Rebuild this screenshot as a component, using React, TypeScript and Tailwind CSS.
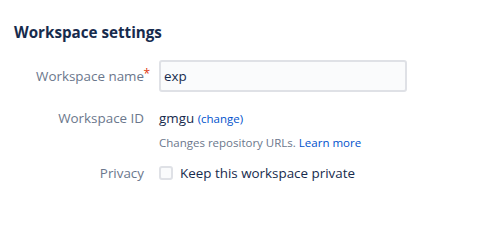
import React from "react";

const font = { fontFamily: '"Open Sans", "Noto Sans", sans-serif' };

function Label({ children, required }: { children: React.ReactNode; required?: boolean }) {
  return (
    <div className="relative w-[130px] shrink-0 text-right text-[13.4px] leading-[20px] text-[#6b778c]">
      {children}
      {required && (
        <span className="absolute -right-[6px] -top-[2px] text-[12px] text-[#de350b]">*</span>
      )}
    </div>
  );
}

export default function App() {
  return (
    <div className="h-[222px] w-[499px] bg-white px-[14px] pt-[22px] text-[#172b4d]" style={font}>
      <h2 className="text-[15.2px] font-bold leading-[20px] text-[#172b4d]">Workspace settings</h2>

      <div className="mt-[18px] flex flex-col">
        <div className="flex items-center gap-[15px]">
          <Label required>Workspace name</Label>
          <input
            defaultValue="exp"
            className="h-[32px] w-[248px] rounded-[3px] border-2 border-[#dfe1e6] bg-[#fafbfc] px-[3px] text-[13.4px] text-[#172b4d] outline-none"
          />
        </div>

        <div className="mt-[16px] flex items-start gap-[15px]">
          <Label>Workspace ID</Label>
          <div className="flex flex-col">
            <div className="text-[13.4px] leading-[20px]">
              gmgu <a className="text-[11.5px] text-[#0052cc]">(change)</a>
            </div>
            <div className="mt-[6px] text-[11.5px] leading-[16px] text-[#6b778c]">
              Changes repository URLs. <a className="text-[#0052cc]">Learn more</a>
            </div>
          </div>
        </div>

        <div className="mt-[12px] flex items-center gap-[15px]">
          <Label>Privacy</Label>
          <label className="flex items-center gap-[7px] text-[13.4px] leading-[20px]">
            <span className="h-[14px] w-[14px] rounded-[3px] border-2 border-[#dfe1e6] bg-[#fafbfc]" />
            Keep this workspace private
          </label>
        </div>
      </div>
    </div>
  );
}
